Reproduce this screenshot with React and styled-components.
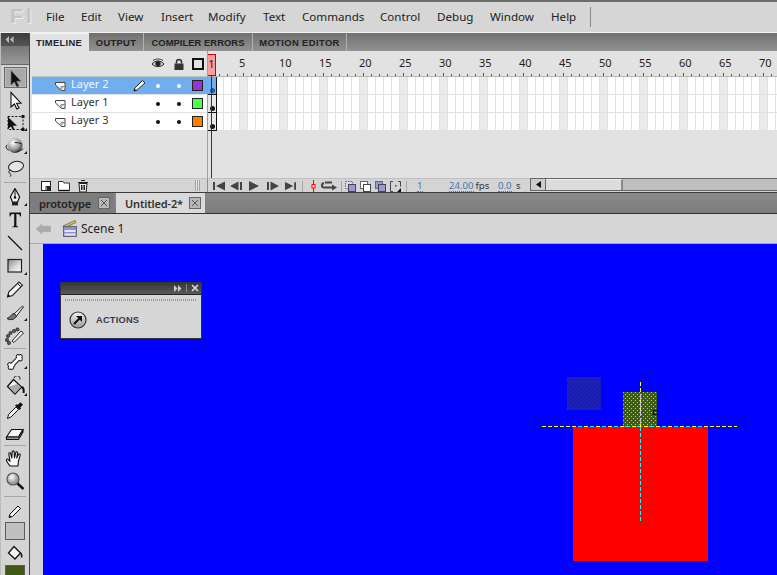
import React from "react";
import styled, { createGlobalStyle } from "styled-components";

const Global = createGlobalStyle`
  html, body { margin: 0; padding: 0; overflow: hidden; background: #d4d4d4; }
  * { box-sizing: border-box; }
`;

const FONT = `"Noto Sans", "Liberation Sans", sans-serif`;
const LABEL = `"Liberation Sans", Arial, sans-serif`;

const Root = styled.div`
  width: 777px; height: 575px; overflow: hidden; display: flex; flex-direction: column;
  background: #d4d4d4; font-family: ${FONT}; color: #222;
`;
const MenuBar = styled.div`
  height: 33px; flex: none; display: flex; align-items: center; padding-bottom: 2px;
  border-top: 2px solid #6c6c6c; border-bottom: 1px solid #f2f2f2; background: #d6d6d6;
`;
const Logo = styled.div`
  width: 46px; padding-left: 10px; font: bold 21px ${LABEL}; color: #c4c4c4;
  text-shadow: 1px 1px 0 #eee; letter-spacing: 3px;
`;
const MenuItem = styled.div`
  width: ${p => p.$w}px; flex: none; font-size: 11.6px; color: #222; white-space: nowrap;
`;
const MenuSep = styled.div`width: 1px; height: 20px; background: #8a8a8a; margin: 2px 0 0 1px;`;

const Main = styled.div`flex: 1; min-height: 0; display: flex;`;

const Toolbar = styled.div`
  width: 30px; flex: none; display: flex; flex-direction: column; align-items: center; overflow: hidden;
  background: #d4d4d4; border-right: 1px solid #4a4a4a; border-left: 1px solid #bdbdbd;
`;
const ToolHead = styled.div`
  align-self: stretch; height: 13px; flex: none; background: linear-gradient(#3c3c3c, #555);
  display: flex; align-items: center; padding-left: 4px; color: #bbb;
`;
const ToolGrip = styled.div`
  align-self: stretch; height: 19px; flex: none; margin-bottom: 2px; background: linear-gradient(#777, #999);
  border-bottom: 1px solid #666;
`;
const Tool = styled.div`
  position: relative; width: 23px; height: ${p => p.$h || 23}px; flex: none;
  display: flex; align-items: center; justify-content: center;
  ${p => p.$active && `background: #a9a9a9; border: 1px solid #6a6a6a; box-shadow: inset 0 0 0 1px #bbb;`}
  ${p => p.$corner && `&::after { content: ""; position: absolute; right: 0; bottom: 3px;
    border-style: solid; border-width: 0 0 3px 3px; border-color: transparent transparent #111 transparent; }`}
`;
const ToolSep = styled.div`
  width: 22px; height: 1px; flex: none; background: #a8a8a8; margin: ${p => p.$t || 1}px 0 ${p => p.$b || 2}px;
`;
const Swatch = styled.div`
  width: 20px; height: ${p => p.$h}px; flex: none; background: ${p => p.$c}; border: 1px solid #5c5c5c;
`;

const Content = styled.div`flex: 1; min-width: 0; display: flex; flex-direction: column;`;

const PanelTabs = styled.div`
  height: 18px; flex: none; display: flex; background: linear-gradient(#707070, #929292);
`;
const PanelTab = styled.div`
  width: ${p => p.$w}px; flex: none; display: flex; align-items: center; justify-content: center;
  font: bold 9.4px ${LABEL}; letter-spacing: ${p => p.$ls ?? 0.3}px; color: ${p => p.$active ? "#223" : "#222"};
  background: ${p => p.$active ? "#e2e2e2" : "transparent"};
  border-right: 1px solid ${p => p.$active ? "#e2e2e2" : "#b0b0b0"};
  ${p => p.$active && "border-top: 1px solid #f2f2f2;"}
`;

const TimelineBody = styled.div`height: 127px; flex: none; display: flex; background: #e2e2e2;`;
const LayerColumn = styled.div`
  width: 178px; flex: none; display: flex; flex-direction: column; padding-left: 2px;
  border-right: 1px solid #a0a0a0;
`;
const LayerHead = styled.div`
  height: 26px; flex: none; display: flex; align-items: center; padding-top: 1px;
  border-bottom: 1px solid #c4c4c4;
`;
const LayerRow = styled.div`
  height: 18px; flex: none; display: flex; align-items: center; font-size: 11px;
  background: ${p => p.$sel ? "#70aeee" : "#fff"}; color: ${p => p.$sel ? "#f4f8ff" : "#333"};
  border-bottom: 1px solid #e0e0e0;
`;
const LayerIcon = styled.div`width: 39px; padding-left: 23px; flex: none; display: flex;`;
const LayerName = styled.div`width: 60px; flex: none; line-height: 14px; margin-top: -3px;`;
const Col = styled.div`
  width: ${p => p.$w}px; flex: none; display: flex; justify-content: center; align-items: center;
`;
const Dot = styled.div`
  width: 4px; height: 4px; border-radius: 50%; background: ${p => p.$sel ? "#fff" : "#111"};
`;
const LayerSwatch = styled.div`
  width: 11px; height: 11px; background: ${p => p.$c}; border: 1px solid #222;
`;
const HeadSpacer = styled.div`width: 115px; flex: none;`;

const FrameColumn = styled.div`flex: 1; min-width: 0; position: relative; display: flex; flex-direction: column; overflow: hidden;`;
const Ruler = styled.div`
  height: 26px; flex: none; position: relative; display: flex; padding: 5px 0 0 31px;
  border-bottom: 1px solid #b4b4b4; background: #e2e2e2;
`;
const RulerNum = styled.div`width: 40px; flex: none; font-size: 11px; line-height: 14px; color: #222;`;
const Ticks = styled.div`
  position: absolute; left: 0; right: 0; bottom: 0; height: 3px;
  background:
    linear-gradient(to right, transparent 3px, #555 3px, #555 4px, transparent 4px) 0 100% / 8px 2px repeat-x,
    linear-gradient(to right, transparent 35px, #555 35px, #555 36px, transparent 36px) 0 0 / 40px 3px repeat-x;
`;
const FrameRow = styled.div`
  height: 18px; flex: none; display: flex; border-bottom: 1px solid #e0e0e0;
  background:
    linear-gradient(to right, transparent 7px, #e0e0e0 7px) 0 0 / 8px 100%,
    linear-gradient(to right, #fff 32px, #ebebeb 32px) 0 0 / 40px 100%;
`;
const KeyFrame = styled.div`
  width: 9px; height: 18px; margin-bottom: -1px; flex: none; display: flex; align-items: flex-end; justify-content: flex-start;
  padding: 0 0 1px 2px; background: ${p => p.$sel ? "#70aeee" : "#e8e8e8"};
  border-right: 1px solid #111; border-bottom: 1px solid #111;
`;
const KeyDot = styled.div`
  width: 5px; height: 5px; border-radius: 50%; background: ${p => p.$sel ? "#1f5aa6" : "#111"};
`;
const PlayHead = styled.div`
  position: absolute; left: -1px; top: 3px; width: 9px; height: 22px; background: #ff9d9d;
  border: 1px solid #c80000; font-size: 11px; line-height: 18px; color: #222; text-align: center;
`;
const PlayLine = styled.div`
  position: absolute; left: 3px; top: 25px; bottom: 0; width: 1px; background: #b00000;
`;

const TimelineFoot = styled.div`
  height: 14px; flex: none; display: flex; align-items: flex-start; background: #d4d4d4;
`;
const FootIcons = styled.div`
  width: 178px; height: 14px; flex: none; display: flex; align-items: center; padding-left: 10px; gap: 5px;
  border-right: 1px solid #8f8f8f; border-top: 1px solid #c0c0c0;
`;
const Grip = styled.div`
  width: 5px; height: 11px; margin-left: 100px;
  background: repeating-linear-gradient(to right, #a0a0a0 0 1px, #e8e8e8 1px 2px);
`;
const Controls = styled.div`height: 14px; display: flex; align-items: center; padding: 1px 0 0 5px; flex: none; border-top: 1px solid #c0c0c0;`;
const Ctl = styled.div`width: ${p => p.$w}px; flex: none; display: flex; justify-content: center;`;
const CtlSep = styled.div`width: 1px; height: 11px; background: #a8a8a8; flex: none; margin: 0 ${p => p.$m}px;`;
const Num = styled.span`
  color: #3d78b8; font-size: 9.6px; line-height: 11px; border-bottom: 1px dotted #3d78b8;
`;
const Unit = styled.span`color: #333; font-size: 9.6px; line-height: 12px; margin-left: 2px;`;
const Meta = styled.div`width: ${p => p.$w}px; flex: none; padding-left: ${p => p.$l || 0}px; display: flex; align-items: center; white-space: nowrap;`;

const Scroll = styled.div`
  flex: 1; height: 13px; min-width: 0; display: flex; border: 1px solid #666; border-right: none; background: #bfbfbf;
`;
const ScrollBtn = styled.div`
  width: 15px; flex: none; display: flex; align-items: center; justify-content: center; border-right: 1px solid #666; background: #ccc;
`;
const ScrollThumb = styled.div`
  width: 77px; flex: none; background: #dcdcdc; border-right: 2px solid #888; border-top: 1px solid #eee;
`;

const DocTabs = styled.div`
  height: 22px; flex: none; display: flex; border-top: 1px solid #3c3c3c; border-bottom: 1px solid #333;
  background: linear-gradient(#8a8a8a, #7c7c7c);
`;
const DocTab = styled.div`
  width: ${p => p.$w}px; flex: none; display: flex; align-items: center; gap: ${p => p.$g}px; padding-left: 9px;
  margin-right: 2px; font-size: 11px; letter-spacing: -.15px; font-weight: 600; color: ${p => p.$active ? "#333" : "#222"};
  background: ${p => p.$active ? "#dadada" : "#7d7d7d"}; white-space: nowrap;
`;
const CloseBox = styled.div`
  width: 12px; height: 12px; flex: none; display: flex; align-items: center; justify-content: center;
  border: 1px solid #666; background: #b8b8b8;
`;
const Crumbs = styled.div`
  height: 30px; flex: none; display: flex; align-items: center; padding-left: 6px; font-size: 12px; color: #222;
  border-bottom: 1px solid #a8a8a8; background: #d6d6d6;
`;
const CrumbIcon = styled.div`width: ${p => p.$w}px; flex: none; display: flex;`;

const StageWrap = styled.div`flex: 1; min-height: 0; padding-left: 13px; background: #d4d4d4;`;
const Stage = styled.div`position: relative; height: 100%; background: #0000ff; overflow: hidden;`;
const StageArt = styled.svg`display: block;`;

const ActionsPanel = styled.div`
  position: absolute; left: 17px; top: 38px; width: 142px; height: 57px; display: flex; flex-direction: column;
  background: #d6d6d6; border: 1px solid #333; border-top: none; border-radius: 2px 2px 0 0;
`;
const ActionsHead = styled.div`
  height: 13px; flex: none; display: flex; align-items: center; justify-content: flex-end; gap: 4px; padding-right: 2px;
  background: linear-gradient(#333, #5a5a5a); border-bottom: 1px solid #222;
`;
const HeadSep = styled.div`width: 1px; height: 8px; background: #888;`;
const Dotted = styled.div`
  height: 2px; margin: 4px 4px 0;
  background: repeating-linear-gradient(to right, #9a9a9a 0 1px, transparent 1px 2px);
`;
const ActionsRow = styled.div`
  flex: 1; display: flex; align-items: center; padding: 1px 0 0 8px; gap: 9px;
  font: bold 9.3px ${LABEL}; color: #3a3a4a; letter-spacing: .2px;
`;

/* ---------- icons ---------- */
const Svg = ({ s = 20, w, h, children, vb }) => (
  <svg width={w || s} height={h || s} viewBox={vb || `0 0 ${w || s} ${h || s}`} style={{ display: "block" }}>{children}</svg>
);
const IArrow = () => <Svg><path d="M6 2.500V17l3.400-3 2.400 5 2.200-1-2.400-4.800H16z" fill="#111" stroke="#777" strokeWidth=".6" /></Svg>;
const ISub = () => <Svg><path d="M6 2.500V17l3.400-3 2.400 5 2.200-1-2.400-4.800H16z" fill="#f8f8f8" stroke="#111" strokeWidth="1.100" /></Svg>;
const IFree = () => (
  <Svg>
    <rect x="3" y="3.500" width="15" height="13" fill="none" stroke="#111" strokeDasharray="2 1.600" />
    <path d="M3 4v12l3-2.600 2 3.800 1.600-.8-1.800-3.600H12z" fill="#111" />
    <rect x="16.500" y="15" width="3" height="3" fill="#111" /><rect x="16.500" y="2" width="3" height="3" fill="#111" />
  </Svg>
);
const I3D = () => (
  <Svg>
    <defs><radialGradient id="sp" cx=".38" cy=".32" r=".75"><stop offset="0" stopColor="#fff" /><stop offset=".6" stopColor="#999" /><stop offset="1" stopColor="#222" /></radialGradient></defs>
    <circle cx="10" cy="9.500" r="7.500" fill="url(#sp)" />
    <ellipse cx="10" cy="11" rx="9" ry="4.500" fill="none" stroke="#222" strokeDasharray="7 8" strokeDashoffset="-2" />
  </Svg>
);
const ILasso = () => (
  <Svg>
    <ellipse cx="11" cy="7.500" rx="7.600" ry="5" transform="rotate(-12 11 7.500)" fill="#e4e4e4" stroke="#222" />
    <path d="M6 11c-2.500.5-3 2.500-1.500 3.200s1.800 1.200.8 3.400" fill="none" stroke="#222" />
  </Svg>
);
const IPen = () => (
  <Svg>
    <path d="M10 .5l4.600 8.200-2 5.300H7.400l-2-5.300z" fill="#eee" stroke="#111" strokeWidth="1.200" />
    <path d="M10 1v8" stroke="#111" /><circle cx="10" cy="9.500" r="1.300" fill="#111" />
    <rect x="7" y="14" width="6" height="3.400" fill="#222" />
  </Svg>
);
const IType = () => <Svg><path d="M4.500 1.500h11.500v4h-.8c-.3-1.700-1-2.500-2.700-2.500h-1.100v11.200c0 1 .5 1.200 1.800 1.300v.8H7.400v-.8c1.300-.1 1.800-.3 1.800-1.300V3H8c-1.700 0-2.400.8-2.700 2.500h-.8z" fill="#111" /></Svg>;
const ILine = () => <Svg><path d="M3 2l14 14" stroke="#111" strokeWidth="1.200" /></Svg>;
const IRect = () => (
  <Svg>
    <defs><linearGradient id="rc" x1="0" y1="0" x2="1" y2="1"><stop offset="0" stopColor="#888" /><stop offset=".6" stopColor="#ddd" /><stop offset="1" stopColor="#fff" /></linearGradient></defs>
    <rect x="3" y="2.500" width="13.500" height="12.500" fill="url(#rc)" stroke="#222" strokeWidth="1.200" />
  </Svg>
);
const IPencil = () => (
  <Svg>
    <path d="M2.500 17l1.200-5L14 2l3.500 3.200L7.500 15.500z" fill="#f4f4f4" stroke="#222" strokeWidth="1.100" />
    <path d="M12.500 3.500l3.500 3.300" stroke="#222" /><path d="M2.500 17l.7-3 2.300 2.200z" fill="#111" />
  </Svg>
);
const IBrush = () => (
  <Svg>
    <path d="M9 11L17.500 3l1 1-7 9z" fill="#eee" stroke="#222" />
    <path d="M9 10.500c-3 .5-3 3.500-7 5 2.500 2 8 1.500 9.500-2.500z" fill="#777" stroke="#222" />
  </Svg>
);
const IDeco = () => (
  <Svg>
    <path d="M7 15L16 5l2.500 2-9.500 9.500z" fill="#f2f2f2" stroke="#222" />
    {[[2, 14], [3, 10], [5.500, 7], [9, 5], [12.500, 3.500], [4, 17]].map(([x, y], i) => <circle key={i} cx={x} cy={y} r="1.700" fill="#555" stroke="#111" strokeWidth=".5" />)}
  </Svg>
);
const BONE = "M7 13L13 7M4.500 12.500L7 15.500M5 15.500L8 13M13 4.500L15.500 7M12.500 7L15.500 4.500";
const IBone = () => (
  <Svg>
    <path d={BONE} fill="none" stroke="#222" strokeWidth="4.600" strokeLinecap="round" />
    <path d={BONE} fill="none" stroke="#fafafa" strokeWidth="2.600" strokeLinecap="round" />
  </Svg>
);
const IBucket = () => (
  <Svg>
    <path d="M9 2a3 3 0 0 1 6 1.500" fill="none" stroke="#222" />
    <path d="M8.500 3.500l8 7.500-6.500 7L2.500 10.500z" fill="#f2f2f2" stroke="#111" strokeWidth="1.300" />
    <path d="M4 10.500l8.500-2.500 3.500 3-6 6.500z" fill="#aaa" />
    <path d="M16.500 11c2 .5 2.500 3 2 6" fill="none" stroke="#111" strokeWidth="2" />
  </Svg>
);
const IDrop = () => (
  <Svg>
    <path d="M2.500 18.500l1-4L11 7l2.500 2.500-7.500 7.500z" fill="#f2f2f2" stroke="#111" />
    <path d="M10 5.500l4.500 4.500 1.500-1.500-.6-1.200 2.600-2.600-2.500-2.500-2.600 2.600-1.200-.6z" fill="#111" />
  </Svg>
);
const IEraser = () => (
  <Svg>
    <path d="M1.500 15l5-7.500H18l-4.500 7.500z" fill="#f6f6f6" stroke="#111" strokeWidth="1.100" />
    <path d="M1.500 15v2.500h12l4.500-7.500v-2.500l-4.500 7.500z" fill="#999" stroke="#111" strokeWidth="1.100" strokeLinejoin="round" />
  </Svg>
);
const IHand = () => (
  <Svg>
    <path d="M5 17c-1.500-2-3.500-4.500-3.600-6 0-1.200 1.400-1.200 2.200-.2l1.400 1.500L3.800 5c-.2-1.500 1.700-1.700 2-.2l1 4.200.4-6c0-1.500 2-1.500 2 0l.3 5.800 1.200-5c.3-1.500 2.200-1.200 1.900.3L11.700 9l1.800-3.400c.7-1.200 2.200-.4 1.700.8l-1.700 5.400-.5 5.200z" fill="#f8f8f8" stroke="#111" strokeWidth="1.100" strokeLinejoin="round" />
  </Svg>
);
const IZoom = () => (
  <Svg>
    <defs><radialGradient id="zm" cx=".4" cy=".35"><stop offset="0" stopColor="#fff" /><stop offset="1" stopColor="#999" /></radialGradient></defs>
    <circle cx="8" cy="8" r="6" fill="url(#zm)" stroke="#555" strokeWidth="1.200" />
    <path d="M12.500 12.500l6 5.500" stroke="#111" strokeWidth="2.400" />
  </Svg>
);
const ISmallPencil = () => (
  <Svg s={16}><path d="M2 14.500l1-3.500L11 3l2.500 2.500L5.500 13.500z" fill="#f4f4f4" stroke="#111" /><path d="M2 14.500l.7-2.500 1.800 1.800z" fill="#111" /></Svg>
);
const ISmallBucket = () => (
  <Svg s={16}><path d="M7 1.500l6.500 6.500-5.500 6L1.500 8z" fill="#f4f4f4" stroke="#111" strokeWidth="1.300" /><path d="M13.500 8c1 .5 1.500 3 1 4.500" stroke="#111" strokeWidth="1.600" fill="none" /></Svg>
);
const IEye = () => (
  <Svg s={14}><path d="M1 7c3-4 9-4 12 0-3 3.500-9 3.500-12 0z" fill="#ccc" stroke="#222" /><circle cx="7" cy="6.500" r="2.600" fill="#222" /><path d="M2 3.500c3-2 7-2 10 0" stroke="#333" fill="none" /></Svg>
);
const ILock = () => (
  <Svg s={14}><path d="M4.500 6.500V5a2.500 2.500 0 0 1 5 0v1.500" fill="none" stroke="#333" strokeWidth="1.500" /><rect x="2.500" y="6.500" width="9" height="6.500" fill="#333" /></Svg>
);
const IPage = () => (
  <Svg w={11} h={11}><path d="M.5 2.500h9.500v8H6.500L.5 5z" fill="#f8f8f8" stroke="#444" /><path d="M6 10.500V6.500h4" fill="#ccc" stroke="#888" /></Svg>
);
const ILayerPen = () => (
  <Svg s={13}><path d="M1 12l.8-3L9.500 1.500l2.500 2.400L4 11.200z" fill="#fff" stroke="#222" /><path d="M1 12l.6-2.200L3.300 11.300z" fill="#111" /></Svg>
);
const INewLayer = () => <Svg s={12}><rect x="1.500" y="1.500" width="9" height="9" fill="#fff" stroke="#222" /><path d="M6 10.500V6.500h4.500" fill="none" stroke="#222" /><rect x="7" y="7" width="4" height="4" fill="#222" /></Svg>;
const IFolder = () => <Svg s={14}><path d="M1.500 2.500h4.500l1 1.500h5.500v7.500H1.500z" fill="#fff" stroke="#333" /><path d="M1.500 11.500h11" stroke="#111" strokeWidth="1.400" /></Svg>;
const ITrash = () => <Svg s={14}><path d="M3 4.500h8l-.8 8.500H3.800z" fill="#eee" stroke="#222" /><path d="M2 3.500h10M5 1.500h4M5.500 6v5M7 6v5M8.500 6v5" stroke="#222" /></Svg>;
const CtlFirst = () => <Svg w={12} h={10}><path d="M0 1h2v8H0zM12 .5v9L3 5z" fill="#444" /></Svg>;
const CtlPrev = () => <Svg w={12} h={10}><path d="M10 1h2v8h-2zM8.500.5v9L0 5z" fill="#444" /></Svg>;
const CtlPlay = () => <Svg w={10} h={10}><path d="M0 0v10l10-5z" fill="#444" /></Svg>;
const CtlNext = () => <Svg w={12} h={10}><path d="M0 1h2v8H0zM3.500.5v9L12 5z" fill="#444" /></Svg>;
const CtlLast = () => <Svg w={12} h={10}><path d="M10 1h2v8h-2zM0 .5v9L9 5z" fill="#444" /></Svg>;
const CtlMark = () => <Svg w={5} h={13}><path d="M2.500 0v13" stroke="#f00" /><rect x="1" y="4.500" width="3" height="3.500" fill="#fff" stroke="#f00" /></Svg>;
const CtlLoop = () => <Svg w={16} h={10}><path d="M4 1.500h7M3 2c-3 1-3 4 0 4.500h8" fill="none" stroke="#444" strokeWidth="2" /><path d="M11 3.500L16 6.500l-5 3z" fill="#444" /></Svg>;
const Onion = ({ a, b, dash }) => (
  <Svg s={11}>
    <rect x=".5" y=".5" width="7" height="7" fill={a} stroke="#667" strokeDasharray={dash ? "1.500 1" : undefined} />
    <rect x="3.500" y="3.500" width="7" height="7" fill={b} stroke="#445" />
  </Svg>
);
const OnionEdit = () => (
  <Svg s={11}><path d="M3 .5H.5v10H3M8 .5h2.500v5" fill="none" stroke="#445" /><rect x="5" y="4" width="1.500" height="1.500" fill="#445" /><path d="M11 7v4H7z" fill="#111" /></Svg>
);
const BackArrow = () => <Svg w={15} h={12}><path d="M0 6l6-5.500V3h9v6H6v2.500z" fill="#aaa" stroke="#bbb" strokeWidth=".5" /></Svg>;
const Clapper = () => (
  <Svg w={16} h={17}>
    <path d="M1 6L13 .5l1 2L2 8z" fill="#d6c93a" stroke="#665" strokeWidth=".8" />
    <rect x="1.500" y="6.500" width="13" height="10" fill="#8d92d8" stroke="#556" strokeWidth=".8" />
    <rect x="2.500" y="10" width="11" height="2" fill="#e8e8f4" /><rect x="2.500" y="13.500" width="11" height="2" fill="#e8e8f4" />
  </Svg>
);
const XMark = ({ c = "#555", s = 8, w = 1 }) => <Svg s={s}><path d={`M1 1L${s - 1} ${s - 1}M${s - 1} 1L1 ${s - 1}`} stroke={c} strokeWidth={w} /></Svg>;
const ActionIcon = () => (
  <Svg s={18}>
    <defs><linearGradient id="ai" x1="0" y1="0" x2="0" y2="1"><stop offset="0" stopColor="#f4f4f4" /><stop offset="1" stopColor="#999" /></linearGradient></defs>
    <circle cx="9" cy="9" r="8" fill="url(#ai)" stroke="#333" strokeWidth="1.200" />
    <path d="M5 13L10.500 7.500" stroke="#111" strokeWidth="2.200" /><path d="M7 5h6v6z" fill="#111" />
  </Svg>
);
const Forward = ({ c = "#ccc" }) => <Svg w={8} h={7}><path d="M0 0v7l3.500-3.500zM4 0v7l3.500-3.500z" fill={c} /></Svg>;
const Collapse = () => <Svg w={9} h={7}><path d="M4 0v7L.5 3.500zM8.500 0v7L5 3.500z" fill="#bbb" /></Svg>;

/* ---------- data ---------- */
const MENU = [["File", 35], ["Edit", 37], ["View", 43], ["Insert", 47], ["Modify", 55], ["Text", 39], ["Commands", 78], ["Control", 57], ["Debug", 53], ["Window", 61], ["Help", 38]];
const TABS = [["TIMELINE", 59, true], ["OUTPUT", 55], ["COMPILER ERRORS", 109, false, 0.05], ["MOTION EDITOR", 94, false, 0.4]];
const LAYERS = [["Layer 2", "#9933cc", true], ["Layer 1", "#4fff4f"], ["Layer 3", "#ff7f00"]];
const NUMS = Array.from({ length: 14 }, (_, i) => (i + 1) * 5);

const Layer = ({ name, color, sel }) => (
  <LayerRow $sel={sel}>
    <LayerIcon><IPage /></LayerIcon>
    <LayerName>{name}</LayerName>
    <Col $w={16}>{sel && <ILayerPen />}</Col>
    <Col $w={22}><Dot $sel={sel} /></Col>
    <Col $w={19}><Dot $sel={sel} /></Col>
    <Col $w={19}><LayerSwatch $c={color} /></Col>
  </LayerRow>
);

export default function App() {
  return (
    <Root>
      <Global />
      <MenuBar>
        <Logo>Fl</Logo>
        {MENU.map(([m, w]) => <MenuItem key={m} $w={w}>{m}</MenuItem>)}
        <MenuSep />
      </MenuBar>
      <Main>
        <Toolbar>
          <ToolHead><Collapse /></ToolHead>
          <ToolGrip />
          <Tool $active $h={21}><IArrow /></Tool>
          <Tool><ISub /></Tool>
          <Tool $corner><IFree /></Tool>
          <Tool $corner><I3D /></Tool>
          <Tool><ILasso /></Tool>
          <ToolSep $t={2} $b={3} />
          <Tool $corner><IPen /></Tool>
          <Tool><IType /></Tool>
          <Tool><ILine /></Tool>
          <Tool $corner><IRect /></Tool>
          <Tool><IPencil /></Tool>
          <Tool $corner><IBrush /></Tool>
          <Tool><IDeco /></Tool>
          <ToolSep />
          <Tool $corner $h={21}><IBone /></Tool>
          <Tool $corner $h={27}><IBucket /></Tool>
          <Tool $h={21}><IDrop /></Tool>
          <Tool $h={24}><IEraser /></Tool>
          <ToolSep />
          <Tool $h={22}><IHand /></Tool>
          <Tool $h={22}><IZoom /></Tool>
          <ToolSep $t={4} $b={3} />
          <Tool $h={22}><ISmallPencil /></Tool>
          <Swatch $h={18} $c="#c0c0c0" />
          <Tool $h={25}><ISmallBucket /></Tool>
          <Swatch $h={18} $c="#3f5a14" />
        </Toolbar>
        <Content>
          <PanelTabs>
            {TABS.map(([t, w, a, ls]) => <PanelTab key={t} $w={w} $active={a} $ls={ls}>{t}</PanelTab>)}
          </PanelTabs>
          <TimelineBody>
            <LayerColumn>
              <LayerHead>
                <HeadSpacer />
                <Col $w={22}><IEye /></Col>
                <Col $w={19}><ILock /></Col>
                <Col $w={19}><Svg s={12}><rect x="1" y="1" width="10" height="10" fill="none" stroke="#111" strokeWidth="2" /></Svg></Col>
              </LayerHead>
              {LAYERS.map(([n, c, s]) => <Layer key={n} name={n} color={c} sel={s} />)}
            </LayerColumn>
            <FrameColumn>
              <Ruler>
                {NUMS.map(n => <RulerNum key={n}>{n}</RulerNum>)}
                <Ticks />
              </Ruler>
              {LAYERS.map(([n, , s]) => (
                <FrameRow key={n}><KeyFrame $sel={s}><KeyDot $sel={s} /></KeyFrame></FrameRow>
              ))}
              <PlayHead>1</PlayHead>
              <PlayLine />
            </FrameColumn>
          </TimelineBody>
          <TimelineFoot>
            <FootIcons>
              <INewLayer /><IFolder /><ITrash />
              <Grip />
            </FootIcons>
            <Controls>
              <Ctl $w={12}><CtlFirst /></Ctl>
              <Ctl $w={22}><CtlPrev /></Ctl>
              <Ctl $w={14}><CtlPlay /></Ctl>
              <Ctl $w={24}><CtlNext /></Ctl>
              <Ctl $w={11}><CtlLast /></Ctl>
              <CtlSep $m={6} />
              <Ctl $w={8}><CtlMark /></Ctl>
              <Ctl $w={23}><CtlLoop /></Ctl>
              <CtlSep $m={1} />
              <Ctl $w={15}><Onion a="#d8d8ee" b="#9a9ad0" dash /></Ctl>
              <Ctl $w={15}><Onion a="#fff" b="#fff" /></Ctl>
              <Ctl $w={15}><Onion a="#9a9ad0" b="#9a9ad0" /></Ctl>
              <Ctl $w={15}><OnionEdit /></Ctl>
              <CtlSep $m={3} />
              <Meta $w={30} $l={7}><Num>1</Num></Meta>
              <Meta $w={58} $l={9}><Num>24.00</Num><Unit>fps</Unit></Meta>
              <Meta $w={32}><Num>0.0</Num><Unit>&nbsp;s</Unit></Meta>
            </Controls>
            <Scroll>
              <ScrollBtn><Svg w={5} h={7}><path d="M5 0v7L0 3.500z" fill="#111" /></Svg></ScrollBtn>
              <ScrollThumb />
            </Scroll>
          </TimelineFoot>
          <DocTabs>
            <DocTab $w={84} $g={7}>prototype<CloseBox><XMark /></CloseBox></DocTab>
            <DocTab $w={89} $g={6} $active>Untitled-2*<CloseBox><XMark /></CloseBox></DocTab>
          </DocTabs>
          <Crumbs>
            <CrumbIcon $w={26}><BackArrow /></CrumbIcon>
            <CrumbIcon $w={19}><Clapper /></CrumbIcon>
            Scene 1
          </Crumbs>
          <StageWrap>
            <Stage>
              <StageArt width="734" height="331" viewBox="0 0 734 331" shapeRendering="crispEdges">
                <defs>
                  <pattern id="gr" width="4" height="4" patternUnits="userSpaceOnUse">
                    <rect width="4" height="4" fill="#3f5c14" />
                    <rect x="0" y="0" width="1" height="1" fill="#b8c4b0" />
                    <rect x="2" y="2" width="1" height="1" fill="#b8c4b0" />
                  </pattern>
                  <pattern id="bl" width="4" height="4" patternUnits="userSpaceOnUse">
                    <rect width="4" height="4" fill="#1a1eb0" />
                    <rect x="0" y="0" width="1" height="1" fill="#2c3aa0" />
                    <rect x="2" y="2" width="1" height="1" fill="#2c3aa0" />
                  </pattern>
                </defs>
                <rect x="524" y="133" width="34" height="33" fill="url(#bl)" />
                <rect x="580" y="148" width="34" height="35" fill="url(#gr)" />
                <rect x="530" y="183" width="135" height="134" fill="#ff0000" />
                <rect x="610" y="166" width="4" height="4" fill="none" stroke="#111" />
                <path d="M499 182H694" stroke="#ffff00" strokeWidth="1" strokeDasharray="4 2" />
                <path d="M535 182H664" stroke="#00ffff" strokeWidth="1" strokeDasharray="4 8" />
                <path d="M597 138V183" stroke="#ffff00" strokeDasharray="4 2" />
                <path d="M597 150V180" stroke="#c8b8e8" strokeDasharray="6 2" />
                <path d="M597 183V278" stroke="#00ffff" strokeDasharray="4 2" />
              </StageArt>
              <ActionsPanel>
                <ActionsHead>
                  <Forward /><HeadSep /><XMark c="#ddd" w={1.600} />
                </ActionsHead>
                <Dotted />
                <ActionsRow><ActionIcon />ACTIONS</ActionsRow>
              </ActionsPanel>
            </Stage>
          </StageWrap>
        </Content>
      </Main>
    </Root>
  );
}
